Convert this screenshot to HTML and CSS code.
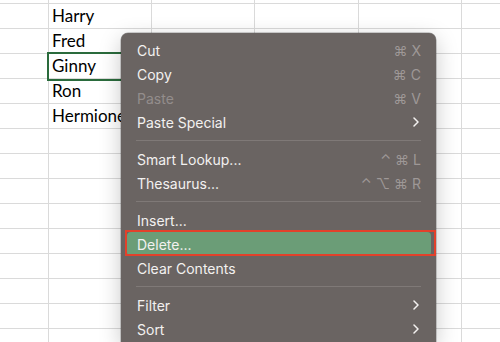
FILE: index.html
```html
<!DOCTYPE html>
<html lang="en">
<head>
  <meta charset="UTF-8" />
  <title>Sheet context menu</title>
  <link rel="stylesheet" href="styles.css">
</head>
<body>

  <div class="sheet">
    <div class="col col-a"></div>
    <div class="col col-b">
      <div class="cell">Harry</div>
      <div class="cell">Fred</div>
      <div class="cell selected">Ginny</div>
      <div class="cell">Ron</div>
      <div class="cell">Hermione</div>
    </div>
    <div class="col col-c"></div>
    <div class="col col-d"></div>
    <div class="col col-e"></div>
    <div class="col col-f"></div>
  </div>

  <!-- Right-click menu -->
  <div class="menu">
    <div class="item"><span>Cut</span><span class="keys"><i>⌘</i><i>X</i></span></div>
    <div class="item"><span>Copy</span><span class="keys"><i>⌘</i><i>C</i></span></div>
    <div class="item disabled"><span>Paste</span><span class="keys"><i>⌘</i><i>V</i></span></div>
    <div class="item"><span>Paste Special</span><svg class="chevron" viewBox="0 0 6 10"><polyline points="1,1 5,5 1,9"/></svg></div>
    <div class="sep"></div>
    <div class="item"><span>Smart Lookup...</span><span class="keys"><i>⌃</i><i>⌘</i><i>L</i></span></div>
    <div class="item"><span>Thesaurus...</span><span class="keys"><i>⌃</i><i>⌥</i><i>⌘</i><i>R</i></span></div>
    <div class="sep"></div>
    <div class="item"><span>Insert...</span></div>
    <div class="item active"><span>Delete...</span></div>
    <div class="item"><span>Clear Contents</span></div>
    <div class="sep"></div>
    <div class="item"><span>Filter</span><svg class="chevron" viewBox="0 0 6 10"><polyline points="1,1 5,5 1,9"/></svg></div>
    <div class="item"><span>Sort</span><svg class="chevron" viewBox="0 0 6 10"><polyline points="1,1 5,5 1,9"/></svg></div>
  </div>

</body>
</html>
```

FILE: styles.css
```css
* {
  box-sizing: border-box;
}

body {
  margin: 0;
  background: #fff;
  overflow: hidden;
}

/* Spreadsheet grid */
.sheet {
  display: flex;
  height: 342px;
  background-image: linear-gradient(#dadada 1px, transparent 1px);
  background-size: 100% 25px;
  background-position: 0 3px;
}

.col {
  border-right: 1px solid #dadada;
  padding-top: 4px;
}

.col-a { width: 49px; }
.col-b { width: 103px; }
.col-c { width: 103px; }
.col-d { width: 104px; }
.col-e { width: 103px; }
.col-f { flex: 1; border-right: none; }

.cell {
  height: 25px;
  padding-left: 3px;
  font-family: Lato, "Open Sans", sans-serif;
  font-size: 17px;
  line-height: 23px;
  color: #000;
  white-space: nowrap;
}

.cell.selected {
  outline: 2px solid #2a6b3c;
}

/* Context menu */
.menu {
  position: absolute;
  left: 121px;
  top: 33px;
  width: 315px;
  height: 309px;
  padding-top: 5px;
  background: #6a6462;
  border-radius: 7px 7px 0 0;
  box-shadow: 0 0 0 0.5px rgba(0,0,0,0.35), 0 6px 22px rgba(0,0,0,0.22);
  font-family: Inter, "Liberation Sans", sans-serif;
  font-size: 14px;
  color: #f3f1f0;
  overflow: hidden;
}

.item {
  position: relative;
  display: flex;
  align-items: center;
  justify-content: space-between;
  height: 24px;
  margin: 0 5px 0 6px;
  padding: 0 10px;
  border-radius: 4px;
}

.item.disabled {
  color: #938d8c;
}

.item.active {
  background: #6b9d77;
}

.item.active::after {
  content: "";
  position: absolute;
  top: -2px;
  left: -2px;
  right: -5px;
  bottom: 0;
  border: 2px solid #e2412b;
}

.keys {
  display: flex;
  gap: 4px;
  color: #9e9897;
  font-family: Inter, "DejaVu Sans", sans-serif;
}

.keys i {
  font-style: normal;
}

.chevron {
  width: 6px;
  height: 10px;
  margin-right: 2px;
}

.chevron polyline {
  fill: none;
  stroke: #f3f1f0;
  stroke-width: 1.5;
  stroke-linecap: round;
  stroke-linejoin: round;
}

.sep {
  height: 1px;
  margin: 6px 15px;
  background: #7f7977;
}
```
